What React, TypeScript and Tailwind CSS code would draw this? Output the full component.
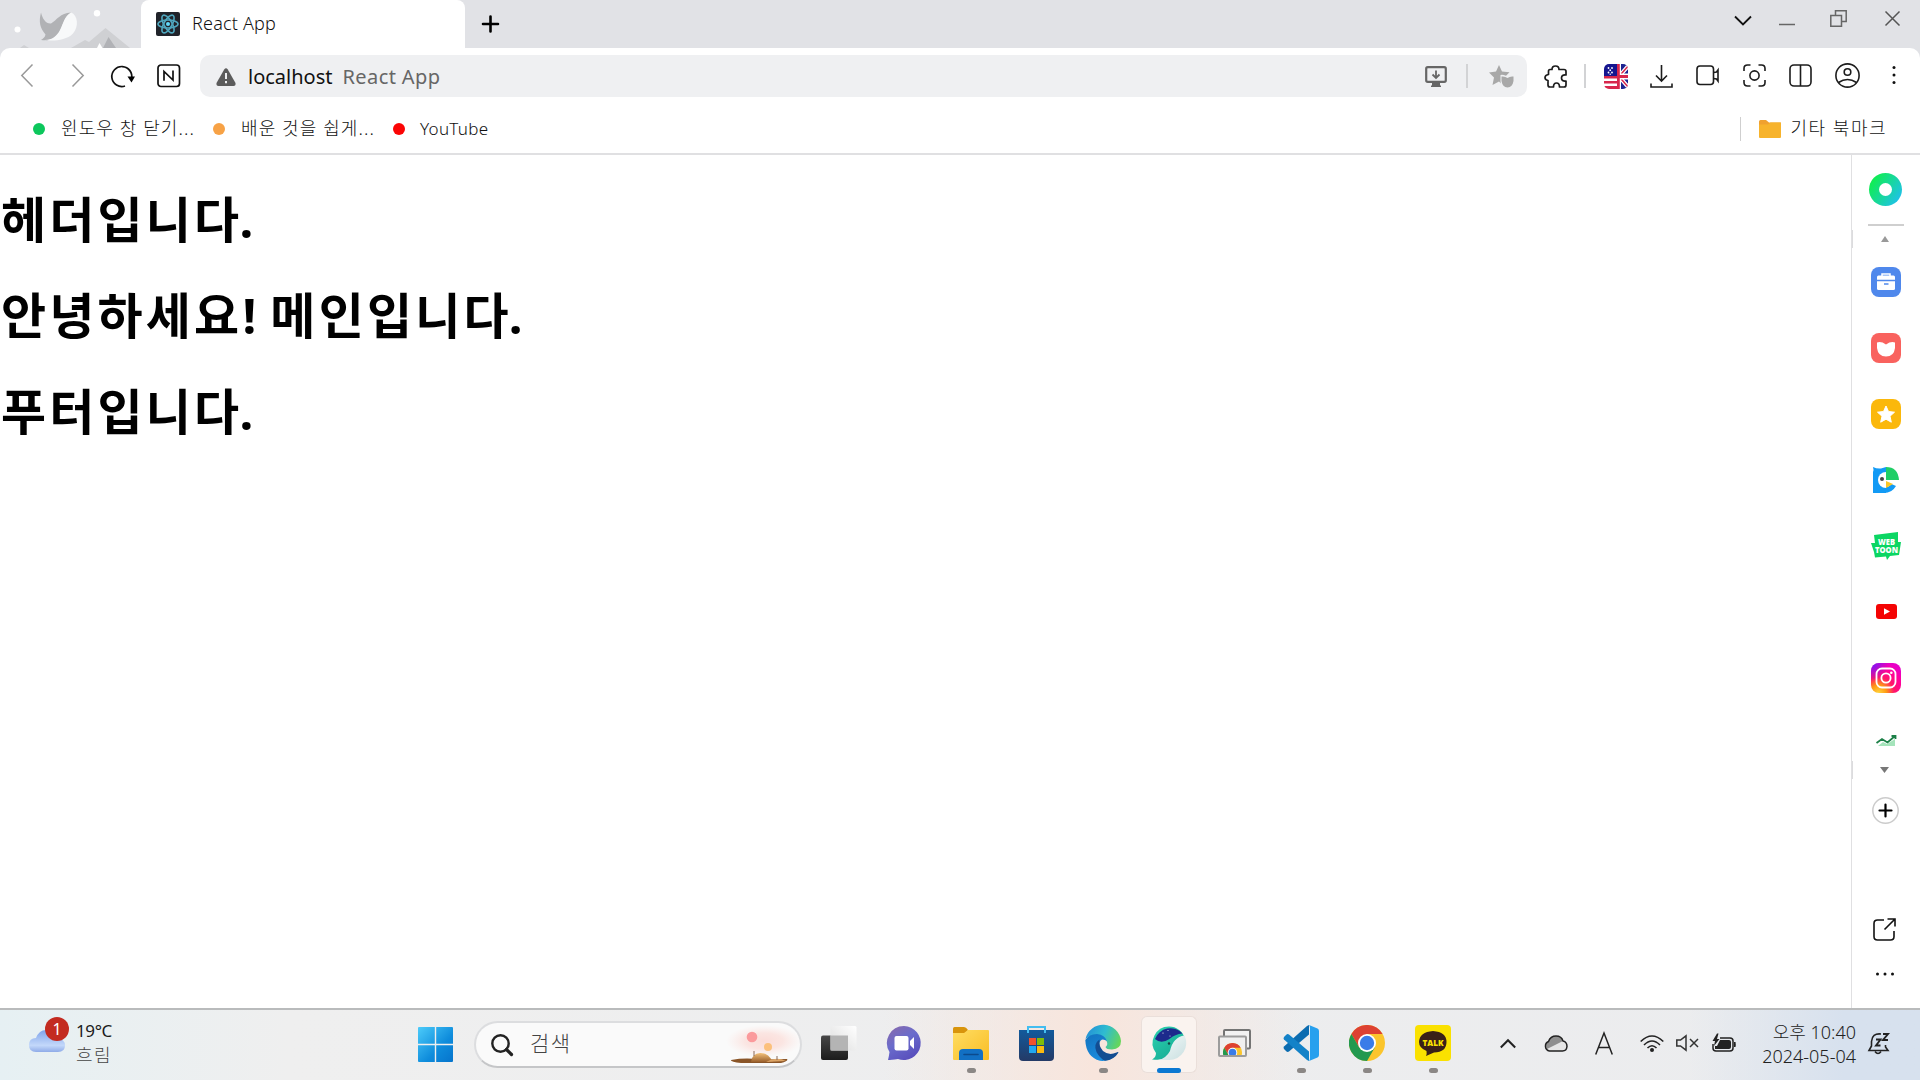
import React from "react";

type IconProps = {
  w: number;
  h: number;
  className?: string;
  children: React.ReactNode;
};

const Icon = ({ w, h, className = "", children }: IconProps) => (
  <svg
    width={w}
    height={h}
    viewBox={`0 0 ${w} ${h}`}
    fill="none"
    className={`block shrink-0 overflow-visible ${className}`}
  >
    {children}
  </svg>
);

const ink = "#1c1c1c";

function ReactFavicon() {
  return (
    <Icon w={24} h={24} className="ml-[15px]">
      <rect width="24" height="24" rx="2" fill="#20232a" />
      <g stroke="#4fa6bd" strokeWidth="1.6">
        <ellipse cx="12" cy="12" rx="10" ry="4" />
        <ellipse cx="12" cy="12" rx="10" ry="4" transform="rotate(60 12 12)" />
        <ellipse cx="12" cy="12" rx="10" ry="4" transform="rotate(120 12 12)" />
      </g>
      <circle cx="12" cy="12" r="2" fill="#61dafb" />
    </Icon>
  );
}

function TabBar() {
  return (
    <div className="flex h-12 shrink-0 bg-[#e1e2e6]">
      <Icon w={141} h={48}>
        <circle cx="17.5" cy="29.5" r="3" fill="#fff" />
        <circle cx="97" cy="13.3" r="3.2" fill="#fff" />
        <path d="M20 48l4-3 5 3zM71 48l14-8 4 2 16.500-14L130 48z" fill="#cfd0d3" />
        <path d="M103 48l5.500-11L116 48z" fill="#b1b2b6" />
        <path d="M97 48l2.500-5L102.500 48z" fill="#fff" />
        <path d="M71 12.500C60 13 57 20 51 23.500C46 24 42.500 19 41 12.500C38.500 22 40 28 45.500 34.500C45 37.500 43 38.500 41 40C50 41.500 56 38 60 31C64 23 64 17 71 12.500z" fill="#b1b2b5" />
        <path d="M71 12.500C78 15 79 27 73 33.500C66 41 52 41 45 40C52 40 57 36 60 30C64 22 64 17 71 12.500z" fill="#f8f9fa" />
      </Icon>
      <div className="flex h-12 w-[324px] items-center rounded-t-lg bg-white">
        <ReactFavicon />
        <span className="ml-[12px] mb-[2px] whitespace-nowrap text-[18px] leading-6 font-light tracking-[0.2px] text-[#111]">
          React App
        </span>
      </div>
      <Icon w={18} h={18} className="ml-[16px] mt-[15px]">
        <path d="M9.500 1.500v15M2 9h15" stroke="#000" strokeWidth="2.600" strokeLinecap="round" />
      </Icon>
      <div className="ml-auto flex">
        <Icon w={18} h={11} className="mt-[15px]">
          <path d="M1 1.500l8 8 8-8" stroke="#111" strokeWidth="1.800" />
        </Icon>
        <Icon w={16} h={2} className="ml-[27px] mt-[24px]">
          <path d="M0 .5h16" stroke="#666" strokeWidth="1.500" />
        </Icon>
        <Icon w={17} h={17} className="ml-[35px] mt-[10px]">
          <path d="M.8 5.500h10.700v10.700H.8zM5.500 5.500V.8h10.700v10.700h-4.500" stroke="#666" strokeWidth="1.500" />
        </Icon>
        <Icon w={15} h={15} className="ml-[38px] mt-[11px] mr-[20px]">
          <path d="M.5.5l14 14M14.500.5l-14 14" stroke="#555" strokeWidth="1.500" />
        </Icon>
      </div>
    </div>
  );
}

function FlagIcon() {
  return (
    <Icon w={24} h={25} className="ml-[18px]">
      <clipPath id="flag-clip">
        <rect width="24" height="25" rx="5" />
      </clipPath>
      <g clipPath="url(#flag-clip)">
        <rect width="13" height="25" fill="#fff" />
        <path d="M0 12h13v2.600H0zM0 17h13v2.600H0zM0 22h13v3H0z" fill="#d8274c" />
        <rect width="13" height="12" fill="#16168f" />
        <g fill="#fff">
          <circle cx="4.500" cy="4" r=".9" /><circle cx="8" cy="4" r=".9" />
          <circle cx="6.200" cy="6.200" r=".9" /><circle cx="4.500" cy="8.500" r=".9" />
          <circle cx="8" cy="8.500" r=".9" /><circle cx="6.200" cy="10.300" r=".7" />
        </g>
        <rect x="13" width="11" height="25" fill="#1c2390" />
        <path d="M15 12.500L25 1M15 12.500L25 24" stroke="#fff" strokeWidth="4" />
        <path d="M15 12.500L25 1M15 12.500L25 24" stroke="#d8274c" strokeWidth="1.600" />
        <path d="M13 0h4v9.500h7v6h-7V25h-4z" fill="#fff" />
        <path d="M13 0h2.800v11H24v3h-8.200v11H13z" fill="#d8274c" />
      </g>
    </Icon>
  );
}

function Toolbar() {
  return (
    <div className="bg-[#e1e2e6]">
      <div className="flex h-14 items-center rounded-t-[10px] bg-white">
        <Icon w={12} h={23} className="ml-[21px] mb-px">
          <path d="M11.500.5L.8 11.500l10.700 11" stroke="#999" strokeWidth="1.500" />
        </Icon>
        <Icon w={12} h={23} className="ml-[39px] mb-px">
          <path d="M.5.5l10.700 11L.5 22.500" stroke="#999" strokeWidth="1.500" />
        </Icon>
        <Icon w={24} h={23} className="ml-[27px]">
          <path d="M20.500 14A10 10 0 1 0 14 21" stroke="#111" strokeWidth="1.700" />
          <path d="M16.500 11.500h7.500L20.500 17.500z" fill="#000" />
        </Icon>
        <Icon w={23} h={23} className="ml-[22px] mb-px">
          <rect x="1" y="1" width="21.500" height="21.500" rx="3" stroke="#111" strokeWidth="1.700" />
          <path d="M7 16.800V7.500l9 8.500V6.500" stroke="#111" strokeWidth="1.700" />
        </Icon>
        <div className="ml-[20px] flex h-[42px] w-[1327px] items-center rounded-[10px] bg-[#eff0f2]">
          <Icon w={20} h={18} className="ml-[16px] mt-[2px]">
            <path d="M8.200 1.500Q10 -1 11.800 1.500L19.500 15Q20 18 17.500 18H2.500Q0 18 .5 15z" fill="#5c5c5c" />
            <path d="M10 5v6M10 13v2.300" stroke="#eff0f2" strokeWidth="2" />
          </Icon>
          <span className="ml-[12px] mt-[1px] whitespace-nowrap text-[20px] leading-7 text-[#111]">localhost</span>
          <span className="ml-[10px] mt-[1px] whitespace-nowrap text-[20px] leading-7 tracking-[0.4px] text-[#666]">React App</span>
          <Icon w={22} h={21} className="ml-auto">
            <rect x="1.200" y="1.200" width="19.600" height="14.600" rx="1.500" stroke="#666" strokeWidth="2.200" />
            <path d="M7 17h8v2.500h1V21H6v-1.500h1z" fill="#666" />
            <path d="M11 4.500v7M7.500 8.500l3.500 3.500 3.500-3.500" stroke="#666" strokeWidth="1.800" />
          </Icon>
          <div className="ml-[19px] h-6 w-[2px] bg-[#d2d3d5]" />
          <Icon w={25} h={23} className="ml-[21px] mr-[13px]">
            <path d="M10 0l3 6.500 7.500.8-3.500 3.500Q14 9.500 11.500 10V16q0 1.500.5 2.500L10 16.500 3.500 20l1.500-7.500L0 7.500l7-1z" fill="#a8a8a8" />
            <path d="M12.500 11.500q3.500-.5 6 1.500 2.500-2 6-1.500v4.500q-1 6-6 6.500-5-.5-6-6.500z" fill="#a8a8a8" />
          </Icon>
        </div>
        <Icon w={23} h={23} className="ml-[17px]">
          <path
            d="M8 4.500Q8 1 11.500 1T15 4.500L20 4.500Q22 4.500 22 6.500V10Q17.500 9.500 17.500 13T22 16V20Q22 22 20 22H15.500Q15.500 18 12.500 18T9.500 22H6Q4 22 4 20V15.500Q1 15 1 12.500T4.500 9.500V6.500Q4.500 4.500 6 4.500z"
            stroke={ink}
            strokeWidth="1.700"
            strokeLinejoin="round"
          />
        </Icon>
        <div className="ml-[17px] h-6 w-[2px] bg-[#d2d3d5]" />
        <FlagIcon />
        <Icon w={23} h={23} className="ml-[21.500px]">
          <path d="M11.500 0v15.500M6 10.500l5.500 5.500 5.500-5.500M1 18.500V22h21v-3.500" stroke={ink} strokeWidth="1.600" />
        </Icon>
        <Icon w={23} h={21} className="ml-[23px] mb-px">
          <rect x="1" y="1" width="16.500" height="18.500" rx="3" stroke={ink} strokeWidth="1.600" />
          <path d="M17.500 7.500L20.500 7 22 5V16l-1.500-2-3-.5" stroke={ink} strokeWidth="1.600" />
        </Icon>
        <Icon w={23} h={23} className="ml-[24px] mb-px">
          <path
            d="M1 7V4.500Q1 1 4.500 1H7.500M15.500 1H18.500Q22 1 22 4.500V7M22 16v2.500Q22 22 18.500 22H15.500M7.500 22H4.500Q1 22 1 18.500V16"
            stroke={ink}
            strokeWidth="1.600"
          />
          <circle cx="11.500" cy="11.500" r="4.600" stroke={ink} strokeWidth="1.600" />
        </Icon>
        <Icon w={23} h={23} className="ml-[23px] mb-px">
          <rect x="1" y="1" width="21" height="21" rx="4" stroke={ink} strokeWidth="1.600" />
          <path d="M11.500 1v21" stroke={ink} strokeWidth="1.600" />
        </Icon>
        <Icon w={25} h={25} className="ml-[23px] mb-px">
          <circle cx="12.500" cy="12.500" r="11.600" stroke={ink} strokeWidth="1.600" />
          <circle cx="12.500" cy="9" r="3.300" stroke={ink} strokeWidth="1.600" />
          <path d="M3.500 19.500Q12.500 13.500 21.500 19.500" stroke={ink} strokeWidth="1.600" />
        </Icon>
        <Icon w={4} h={20} className="ml-[32px]">
          <circle cx="2" cy="1.500" r="1.500" fill="#111" />
          <circle cx="2" cy="9" r="1.500" fill="#111" />
          <circle cx="2" cy="16.500" r="1.500" fill="#111" />
        </Icon>
      </div>
    </div>
  );
}

function BookmarksBar() {
  return (
    <div className="flex h-[51px] items-center border-b-2 border-[#e0e0e2] text-[18px] leading-6 font-light text-[#111]">
      <div className="flex w-[180px] items-center">
        <i className="ml-[33px] h-3 w-3 shrink-0 rounded-full bg-[#0cc75c]" />
        <span className="ml-[16px] mb-[2px] whitespace-nowrap tracking-[1.1px]">윈도우 창 닫기...</span>
      </div>
      <div className="flex w-[180px] items-center">
        <i className="ml-[33px] h-3 w-3 shrink-0 rounded-full bg-[#f7a246]" />
        <span className="ml-[16px] mb-[2px] whitespace-nowrap tracking-[1.1px]">배운 것을 쉽게...</span>
      </div>
      <div className="flex items-center">
        <i className="ml-[33px] h-3 w-3 shrink-0 rounded-full bg-[#fb0505]" />
        <span className="ml-[15px] whitespace-nowrap text-[17px] tracking-[0.3px]">YouTube</span>
      </div>
      <div className="ml-auto h-6 w-px bg-[#cfcfcf]" />
      <Icon w={22} h={18} className="ml-[18px]">
        <path d="M0 1.500Q0 0 1.500 0H7l3 2.500H22V8H0z" fill="#f0a12f" />
        <path d="M0 4.500H9L11.500 2.500H21Q22 2.500 22 3.500V17Q22 18 21 18H1Q0 18 0 17z" fill="#f7b32c" />
      </Icon>
      <span className="mr-[33px] mb-[2px] ml-[10px] whitespace-nowrap tracking-[1.5px]">기타 북마크</span>
    </div>
  );
}

const Stop = () => <span className="-ml-[3px]">.</span>;

function Page() {
  return (
    <main className="flex-1 pt-[16px] pl-[1px] text-[49px] leading-[96px] font-bold tracking-[3.2px] text-black [word-spacing:-5px]">
      <h1>헤더입니다<Stop /></h1>
      <h1>안녕하세요! 메인입니다<Stop /></h1>
      <h1>푸터입니다<Stop /></h1>
    </main>
  );
}

function Sidebar() {
  return (
    <aside className="relative flex w-[69px] shrink-0 flex-col items-center border-l border-[#e0e0e2]">
      <i className="absolute top-[75px] left-0 h-[18px] w-px bg-[#dcdcde]" />
      <i className="absolute top-[606px] left-0 h-[18px] w-px bg-[#dcdcde]" />
      <Icon w={33} h={33} className="mt-[18px] mr-[1px]">
        <defs>
          <linearGradient id="green-dot" x1="0.1" y1="0.2" x2="1" y2="0.8">
            <stop offset="0" stopColor="#10ee50" />
            <stop offset="1" stopColor="#20bff0" />
          </linearGradient>
        </defs>
        <circle cx="16.500" cy="16.500" r="16.500" fill="url(#green-dot)" />
        <circle cx="16.500" cy="16.500" r="6.500" fill="#fff" />
      </Icon>
      <div className="mt-[18px] h-[2px] w-9 bg-[#cfcfcf]" />
      <Icon w={8} h={6} className="mt-[10px] mr-[3px]">
        <path d="M0 6l4-6 4 6z" fill="#999" />
      </Icon>

      <Icon w={30} h={30} className="mt-[25px]">
        <rect width="30" height="30" rx="8" fill="#4f88ec" />
        <path d="M11 9V7h8v2" stroke="#fff" strokeWidth="1.500" />
        <rect x="6" y="8.500" width="18" height="14.500" rx="1.500" fill="#fff" />
        <path d="M6 13.500h18M13 17h4.500" stroke="#4f88ec" strokeWidth="1.400" />
      </Icon>
      <Icon w={30} h={30} className="mt-[36px]">
        <rect width="30" height="30" rx="8" fill="#f9625e" />
        <path d="M6 9.500Q10 8 15 11.500 20 8 24 9.500V15q-1 8.500-9 8.500T6 15z" fill="#fff" />
      </Icon>
      <Icon w={30} h={30} className="mt-[36px]">
        <rect width="30" height="30" rx="8" fill="#fbb80b" />
        <path
          d="M15 7l2.500 5.500 6 .7-4.500 4 1.300 6L15 20.200l-5.300 3 1.300-6-4.500-4 6-.7z"
          fill="#fff"
          stroke="#fff"
          strokeLinejoin="round"
        />
      </Icon>
      <Icon w={26} h={26} className="mt-[38px] mr-[1px]">
        <path d="M0 0Q4 2 8 1.500L13 0V26H0V5Q1 3 0 0z" fill="#129af5" />
        <path d="M10 20.500Q15 21 18.500 17L23 19Q19 26 11 26z" fill="#129af5" />
        <path d="M13 5a8 8 0 0 0 0 16z" fill="#fff" />
        <path d="M13 0Q25 0 26 13H13z" fill="#20ce66" />
        <path d="M13 14l7 3-7 4z" fill="#f9c526" />
        <circle cx="9" cy="12" r="2" fill="#444" />
      </Icon>
      <Icon w={30} h={28} className="mt-[39px]">
        <path d="M3 3L27 0v10h3l-2 13-9 1-3 4-1-3.500-11 1L3 20 0 11h4z" fill="#0bd663" />
        <text x="15.500" y="13" textAnchor="middle" fontSize="8" fontWeight="800" fill="#fff" textLength="17" lengthAdjust="spacingAndGlyphs" fontFamily="Open Sans">WEB</text>
        <text x="15.500" y="20.500" textAnchor="middle" fontSize="8" fontWeight="800" fill="#fff" textLength="23" lengthAdjust="spacingAndGlyphs" fontFamily="Open Sans">TOON</text>
      </Icon>
      <Icon w={21} h={15} className="mt-[44px]">
        <rect width="21" height="15" rx="3" fill="#f40404" />
        <path d="M8 4.300l6 3.200-6 3.200z" fill="#fff" />
      </Icon>
      <Icon w={30} h={30} className="mt-[44px]">
        <defs>
          <radialGradient id="insta" cx="0.25" cy="1" r="1.05">
            <stop offset="0" stopColor="#ffd43c" />
            <stop offset="0.25" stopColor="#ff9a14" />
            <stop offset="0.5" stopColor="#ff1768" />
            <stop offset="0.8" stopColor="#ff00a0" />
            <stop offset="1" stopColor="#e800c8" />
          </radialGradient>
          <radialGradient id="insta-corner" cx="0" cy="0" r="0.6">
            <stop offset="0" stopColor="#6a18ff" />
            <stop offset="1" stopColor="#6a18ff" stopOpacity="0" />
          </radialGradient>
        </defs>
        <rect width="30" height="30" rx="8" fill="url(#insta)" />
        <rect width="30" height="30" rx="8" fill="url(#insta-corner)" />
        <rect x="5.500" y="5.500" width="19" height="19" rx="5.500" stroke="#fff" strokeWidth="1.800" />
        <circle cx="15" cy="15" r="4.600" stroke="#fff" strokeWidth="1.800" />
        <circle cx="20.300" cy="9.700" r="1.300" fill="#fff" />
      </Icon>
      <Icon w={20} h={11} className="mt-[42px]">
        <path d="M2 11l5-4 4 2 8-5v7z" fill="#a5e4bb" />
        <path d="M.5 8l5.500-4 5.500 3.500L19 1M15.500 1H19.500V4" stroke="#1c8048" strokeWidth="1.800" />
      </Icon>
      <Icon w={9} h={6} className="mt-[21px] mr-[3px]">
        <path d="M0 0h9L4.500 6z" fill="#777" />
      </Icon>
      <Icon w={27} h={27} className="mt-[24px] mr-[1px]">
        <circle cx="13.500" cy="13.500" r="12.700" fill="#fff" stroke="#ccc" strokeWidth="1.500" />
        <path d="M13.500 7.500v12M7.500 13.500h12" stroke="#000" strokeWidth="2.200" strokeLinecap="round" />
      </Icon>
      <Icon w={23} h={23} className="mt-[94px] mr-[3px]">
        <path d="M11 2H4.500Q1 2 1 5.500V18.500Q1 22 4.500 22H17.500Q21 22 21 18.500V13" stroke="#111" strokeWidth="1.600" />
        <path d="M11.500 11.500L22 1M14.500 1H22V8.500" stroke="#111" strokeWidth="1.600" />
      </Icon>
      <Icon w={18} h={4} className="mt-[31px] mr-[3px]">
        <circle cx="1.500" cy="2" r="1.500" fill="#111" />
        <circle cx="9" cy="2" r="1.500" fill="#111" />
        <circle cx="16.500" cy="2" r="1.500" fill="#111" />
      </Icon>
    </aside>
  );
}

function Weather() {
  return (
    <div className="flex w-[402px] items-start">
      <div className="relative ml-[29px] mt-[19px]">
        <Icon w={36} h={24}>
          <defs>
            <linearGradient id="cloud" x1="0" y1="0" x2="0" y2="1">
              <stop offset="0" stopColor="#7fa3ea" />
              <stop offset="0.7" stopColor="#c3d8fa" />
              <stop offset="1" stopColor="#8fabe8" />
            </linearGradient>
          </defs>
          <path d="M7 23Q0 23 0 16T7 9Q10 1 17 1T28 9Q36 10 36 16.500T29 23z" fill="url(#cloud)" />
        </Icon>
        <span className="absolute -top-[12px] left-[16px] flex h-6 w-6 items-center justify-center rounded-full bg-[#c32b20] text-[16px] leading-none text-white">
          1
        </span>
      </div>
      <div className="mt-[9px] ml-[11px] flex flex-col text-[17px] leading-[24px]">
        <span className="tracking-[-0.4px] text-[#1b1b1b]">19°C</span>
        <span className="text-[18px] font-light tracking-[1.500px] text-[#444]">흐림</span>
      </div>
    </div>
  );
}

function SearchBox() {
  return (
    <div className="mt-[11px] flex h-[47px] w-[328px] items-center overflow-hidden rounded-full border-2 border-[#dcdddf] border-b-[#c5c6c8] bg-[#fafafa]">
      <Icon w={22} h={22} className="ml-[15px]">
        <circle cx="9.500" cy="9.500" r="8.200" stroke="#222" strokeWidth="2.400" />
        <path d="M15.500 15.500l5 5" stroke="#222" strokeWidth="3.200" strokeLinecap="round" />
      </Icon>
      <span className="mb-[3px] ml-[17px] text-[21px] leading-7 font-light tracking-[1.500px] text-[#444]">검색</span>
      <Icon w={70} h={36} className="ml-auto mr-[4px]">
        <defs>
          <radialGradient id="haze">
            <stop offset="0" stopColor="#fbdcd8" />
            <stop offset="0.5" stopColor="#fbe0dc" stopOpacity="0.8" />
            <stop offset="1" stopColor="#fbe8e5" stopOpacity="0" />
          </radialGradient>
          <linearGradient id="dune" x1="0" y1="0" x2="0" y2="1">
            <stop offset="0" stopColor="#f3c27c" />
            <stop offset="1" stopColor="#9a5f2c" />
          </linearGradient>
        </defs>
        <ellipse cx="38" cy="14" rx="38" ry="16" fill="url(#haze)" />
        <circle cx="26" cy="10" r="5.300" fill="#fb9a9c" />
        <circle cx="42" cy="20" r="4" fill="#fcc07c" />
        <path d="M5 33Q20 30.500 33 32.500L61 32Q63 34 55 36H15Q4 35 5 33z" fill="#8a5528" />
        <path d="M25 35Q26 26.500 34 26T47 35z" fill="url(#dune)" />
        <path d="M40 35Q50 29 60 34z" fill="#dda566" />
        <path d="M28 24v5M51 29v4" stroke="#8a6a5a" />
      </Icon>
    </div>
  );
}

type CellProps = { running?: boolean; active?: boolean; children: React.ReactNode };

const TaskCell = ({ running, active, children }: CellProps) => (
  <div className="flex w-[66px] flex-col items-center">
    <div
      className={
        active
          ? "mt-[6px] flex h-[51px] w-14 items-center justify-center rounded-t-md border border-b-0 border-[#eadfda] bg-[#faf3ef]"
          : "mt-[5px] flex h-[56px] w-14 items-center justify-center"
      }
    >
      {children}
    </div>
    {active && (
      <div className="flex h-[6px] w-14 justify-center rounded-b-md border border-t-0 border-[#eadfda] bg-[#faf3ef]">
        <i className="mt-px h-[5px] w-6 shrink-0 rounded-full bg-[#0b78d2]" />
      </div>
    )}
    {running && <i className="-mt-[3px] h-[5px] w-[9px] rounded-full bg-[#8b8785]" />}
  </div>
);

function ChromeMark({ size }: { size: number }) {
  return (
    <svg width={size} height={size} viewBox="0 0 36 36" className="block">
      <circle cx="18" cy="18" r="18" fill="#fbc52c" />
      <path d="M18 9H33.600A18 18 0 0 0 2.400 9L10.200 22.500z" fill="#dd4132" />
      <path d="M2.400 9A18 18 0 0 0 18 36L25.800 22.500H10.200z" fill="#23994f" />
      <circle cx="18" cy="18" r="9" fill="#fff" />
      <circle cx="18" cy="18" r="7.200" fill="#3a7ce8" />
    </svg>
  );
}

function TaskIcons() {
  return (
    <div className="flex">
      <TaskCell>
        <Icon w={36} h={34}>
          <defs>
            <linearGradient id="tv-back" x1="0" y1="0" x2="0" y2="1">
              <stop offset="0" stopColor="#474747" />
              <stop offset="1" stopColor="#1c1c1c" />
            </linearGradient>
            <linearGradient id="tv-front" x1="1" y1="0" x2="0" y2="1">
              <stop offset="0" stopColor="#fff" />
              <stop offset="1" stopColor="#dcdcdc" />
            </linearGradient>
          </defs>
          <rect x="0" y="9.500" width="27" height="24.500" rx="2" fill="url(#tv-back)" />
          <rect x="9.500" y="0" width="26" height="24.500" rx="1.500" fill="url(#tv-front)" />
          <rect x="9.500" y="9.500" width="17.500" height="15" fill="#b4b4b4" />
        </Icon>
      </TaskCell>
      <TaskCell>
        <Icon w={34} h={34} className="mr-[2px]">
          <defs>
            <linearGradient id="chat" x1="0" y1="0" x2="0.6" y2="1">
              <stop offset="0" stopColor="#8b69a8" />
              <stop offset="0.5" stopColor="#6a6ccc" />
              <stop offset="1" stopColor="#5a50bd" />
            </linearGradient>
          </defs>
          <path d="M17 0a17 17 0 1 1-6 33Q4 34 1 34 2 30 2.500 26A17 17 0 0 1 17 0z" fill="url(#chat)" />
          <rect x="7.500" y="10" width="14" height="14.500" rx="2" fill="#fff" />
          <path d="M23 15l4-4v12l-4-4z" fill="#fff" />
        </Icon>
      </TaskCell>
      <TaskCell running>
        <Icon w={36} h={33} className="mt-px">
          <defs>
            <linearGradient id="folder" x1="0" y1="0" x2="1" y2="1">
              <stop offset="0" stopColor="#ffdd63" />
              <stop offset="1" stopColor="#f9bd24" />
            </linearGradient>
          </defs>
          <path d="M0 1.500Q0 0 1.500 0H11Q13 0 15 3L12 7H0z" fill="#d8940c" />
          <path d="M0 6H11L15 3H35Q36 3 36 4V32Q36 33 35 33H1Q0 33 0 32z" fill="url(#folder)" />
          <path d="M6 33V26Q6 22 10 22H26Q30 22 30 26V33z" fill="#1270c4" />
          <path d="M11 27.500h14" stroke="#0c4a8c" strokeWidth="1.600" strokeLinecap="round" />
        </Icon>
      </TaskCell>
      <TaskCell>
        <Icon w={35} h={35} className="mr-[1px]">
          <defs>
            <linearGradient id="store" x1="0" y1="0" x2="0" y2="1">
              <stop offset="0" stopColor="#125a9c" />
              <stop offset="1" stopColor="#243a66" />
            </linearGradient>
          </defs>
          <path d="M0 4H35V31Q35 35 31 35H4Q0 35 0 31z" fill="url(#store)" />
          <path d="M9 7V1H26V7" stroke="#43bdf0" strokeWidth="2" />
          <path d="M10 12h7v7h-7z" fill="#f1512c" />
          <path d="M18 12h7v7h-7z" fill="#80bc0a" />
          <path d="M10 20h7v7h-7z" fill="#22a8f0" />
          <path d="M18 20h7v7h-7z" fill="#fcba10" />
        </Icon>
      </TaskCell>
      <TaskCell running>
        <Icon w={36} h={36}>
          <defs>
            <linearGradient id="edge-top" x1="0" y1="0.3" x2="1" y2="0.6">
              <stop offset="0" stopColor="#2390d8" />
              <stop offset="0.5" stopColor="#2fbcd0" />
              <stop offset="1" stopColor="#66d65a" />
            </linearGradient>
            <linearGradient id="edge-mid" x1="0" y1="0" x2="0.6" y2="1">
              <stop offset="0" stopColor="#1273bf" />
              <stop offset="1" stopColor="#1c8ee0" />
            </linearGradient>
          </defs>
          <path d="M.5 14A18 18 0 0 1 36 16Q36 24 27 24.500 21 24.500 20.500 22 23 20 22 17 19 9 10 10 4 10.500.5 14z" fill="url(#edge-top)" />
          <path d="M.3 15Q4 9 12 9 20 10 22 16 16 12 14.500 18 13 26 20 30.500 27 33 33 27 27 37 15 35.800Q1 32 .3 15z" fill="url(#edge-mid)" />
          <path d="M14.500 14.500Q8 19 11.500 27 15 33.500 20 35.800 29 35 33.500 27.500 33 26.500 31.500 27.500 24 31 18 26 13.500 21 14.500 14.500z" fill="#134d92" />
        </Icon>
      </TaskCell>
      <TaskCell active>
        <Icon w={34} h={34} className="mt-[2px] mr-[1px]">
          <defs>
            <linearGradient id="whale-body" x1="0" y1="0" x2="0.8" y2="1">
              <stop offset="0" stopColor="#2fd3b0" />
              <stop offset="1" stopColor="#12a892" />
            </linearGradient>
            <linearGradient id="whale-belly" x1="0" y1="0" x2="1" y2="1">
              <stop offset="0" stopColor="#f6fbfb" />
              <stop offset="1" stopColor="#c9dfe0" />
            </linearGradient>
          </defs>
          <path d="M17 .5A16.500 16.500 0 0 1 33 13L18 32Q10 34.500 0 33.500 4 31.500 4 27A16.500 16.500 0 0 1 17 .5z" fill="url(#whale-body)" />
          <path d="M3 13A16.500 16.500 0 0 1 30.500 7.500Q23 8 17.500 13 9 18.500 3 13z" fill="#1c2a8c" />
          <path d="M32.500 9.500A17 17 0 0 1 17 34H6Q14 32.500 18 25 21 11 32.500 9.500z" fill="url(#whale-belly)" />
          <circle cx="17" cy="17.500" r="1.200" fill="#144" />
          <circle cx="11" cy="7" r=".6" fill="#fff" />
          <circle cx="16" cy="4.500" r=".5" fill="#fff" />
          <circle cx="18" cy="10" r=".5" fill="#fff" />
        </Icon>
      </TaskCell>
      <TaskCell>
        <div className="relative mr-[1px]">
          <Icon w={33} h={28}>
            <rect x="6" y="1" width="26" height="18.500" rx="1" fill="#f2f2f2" stroke="#747474" strokeWidth="2" />
            <rect x="1" y="7.500" width="27" height="19.500" rx="1" fill="#f0f0f0" stroke="#9c9c9c" strokeWidth="2" />
          </Icon>
          <div className="absolute left-[5px] top-[14px] h-[12px] w-[19px] overflow-hidden">
            <ChromeMark size={19} />
          </div>
        </div>
      </TaskCell>
      <TaskCell running>
        <Icon w={36} h={36}>
          <path d="M26 0v9.500L6 26.500Q4.500 27.500 3 26L1 24Q0 22.500 1 21.500L24 1z" fill="#0b6cb0" />
          <path d="M26 36V26.500L6 9.500Q4.500 8.500 3 10L1 12Q0 13.500 1 14.500L24 35z" fill="#1382c8" />
          <path d="M26 0L34.500 3.500Q36 4.200 36 6V30Q36 31.800 34.500 32.500L26 36Q27 35 27 33V3Q27 1 26 0z" fill="#27a0ee" />
        </Icon>
      </TaskCell>
      <TaskCell running>
        <ChromeMark size={36} />
      </TaskCell>
      <TaskCell running>
        <Icon w={36} h={36}>
          <rect width="36" height="36" rx="4" fill="#fae100" />
          <path d="M18 6Q31.500 7 31.500 17T19 27.500L11 31Q12 28.500 11.500 26 4 23 4 17 4.500 7 18 6z" fill="#3a2018" />
          <text x="18" y="20.500" textAnchor="middle" textLength="21" lengthAdjust="spacingAndGlyphs" fontSize="9.500" fontWeight="800" fill="#fae100" fontFamily="Open Sans">TALK</text>
        </Icon>
      </TaskCell>
    </div>
  );
}

function Tray() {
  return (
    <div className="ml-[34px] flex h-[66px] items-center">
      <Icon w={16} h={9}>
        <path d="M.8 8.500L8 1.200l7.200 7.300" stroke="#222" strokeWidth="2" />
      </Icon>
      <Icon w={24} h={17} className="ml-[28px]">
        <path d="M5.500 16A5 5 0 0 1 4.500 6.500Q6.500 1 12 1T19 6Q23 7 23 11.500 22.500 16 18.500 16z" fill="#e6e6e6" />
        <path d="M4.500 6.500Q6.500 1 12 1T19 6L13 9 3 14Q.5 9 4.500 6.500z" fill="#8f8f8f" />
        <path d="M5.500 16A5 5 0 0 1 4.500 6.500Q6.500 1 12 1T19 6Q23 7 23 11.500 22.500 16 18.500 16z" stroke="#222" strokeWidth="1.500" />
      </Icon>
      <Icon w={18} h={23} className="ml-[27px] mt-[1px]">
        <path d="M.7 22.500L9 1l8.300 21.500M3.500 15.500h11" stroke="#222" strokeWidth="1.500" />
      </Icon>
      <Icon w={24} h={17} className="ml-[27px]">
        <path d="M.7 6.500Q12-4.500 23.300 6.500M4 10Q12 2 20 10M7.500 13Q12 8.500 16.500 13" stroke="#222" strokeWidth="1.600" />
        <circle cx="12" cy="15" r="2" fill="#222" />
      </Icon>
      <Icon w={23} h={16} className="ml-[12px]">
        <path d="M.8 5H4.500L10 .8V15.200L4.500 11H.8zM14 4l8 8M22 4l-8 8" stroke="#333" strokeWidth="1.500" />
      </Icon>
      <Icon w={24} h={18} className="ml-[13px]">
        <path d="M8 4H18Q21 4 21 7V14Q21 17 18 17H4Q1 17 1 14V10" stroke="#222" strokeWidth="1.500" />
        <path d="M8 6H17Q19 6 19 8V13Q19 15 17 15H3V12H5z" fill="#222" />
        <path d="M22 8h1.500Q24 10.500 23.500 13H22z" fill="#222" />
        <path d="M5-.5L.5 7H3L2 12 7.500 5H5L6.500-.5z" fill="#222" />
      </Icon>
      <div className="ml-[20px] mt-[2px] flex w-[100px] flex-col items-end text-[18px] leading-[24px] text-[#222]">
        <span className="font-light whitespace-nowrap">오후 10:40</span>
        <span className="font-light whitespace-nowrap">2024-05-04</span>
      </div>
      <Icon w={22} h={22} className="ml-[12px] mt-[1px]">
        <path d="M13 1Q4 0 3.500 8.500V13L1 17.500H20L17.500 14V12" stroke="#222" strokeWidth="1.600" />
        <path d="M7 18.500Q10 22.500 13 18.500" stroke="#222" strokeWidth="1.600" />
        <path d="M15 1H20L15 7H20M8 6.500H12.500L8 12.500H12.500" stroke="#222" strokeWidth="1.900" />
      </Icon>
    </div>
  );
}

export default function App() {
  return (
    <div className="flex h-[1080px] w-[1920px] flex-col overflow-hidden bg-white font-['Noto_Sans','Noto_Sans_CJK_KR',sans-serif]">
      <TabBar />
      <Toolbar />
      <BookmarksBar />
      <div className="flex h-[853px] shrink-0">
        <Page />
        <Sidebar />
      </div>
      <footer className="flex h-[72px] shrink-0 border-t-2 border-[#b9bbbc] bg-linear-to-r from-[#e6f0f3] via-[#efefef] via-15% to-[#ebecee] to-100%">
        <div className="flex w-full bg-linear-to-r from-transparent from-46% via-[#f8e5dc] via-57% to-transparent to-68%">
          <div className="flex w-full bg-linear-to-r from-transparent from-88% to-[#d7e1ee] to-96%">
            <Weather />
            <div className="flex items-center">
              <Icon w={35} h={35} className="ml-[16px] mb-[1px]">
                <defs>
                  <linearGradient id="win" x1="0" y1="0" x2="1" y2="1">
                    <stop offset="0" stopColor="#4ccbfa" />
                    <stop offset="0.6" stopColor="#0e8cdc" />
                    <stop offset="1" stopColor="#0674cc" />
                  </linearGradient>
                </defs>
                <path d="M1 0H16.800V16.800H0V1Q0 0 1 0zM18.200 0H34Q35 0 35 1V16.800H18.200zM0 18.200H16.800V35H1Q0 35 0 34zM18.200 18.200H35V34Q35 35 34 35H18.200z" fill="url(#win)" />
              </Icon>
            </div>
            <div className="ml-[21px]">
              <SearchBox />
            </div>
            <div className="ml-[4px]">
              <TaskIcons />
            </div>
            <Tray />
          </div>
        </div>
      </footer>
    </div>
  );
}
